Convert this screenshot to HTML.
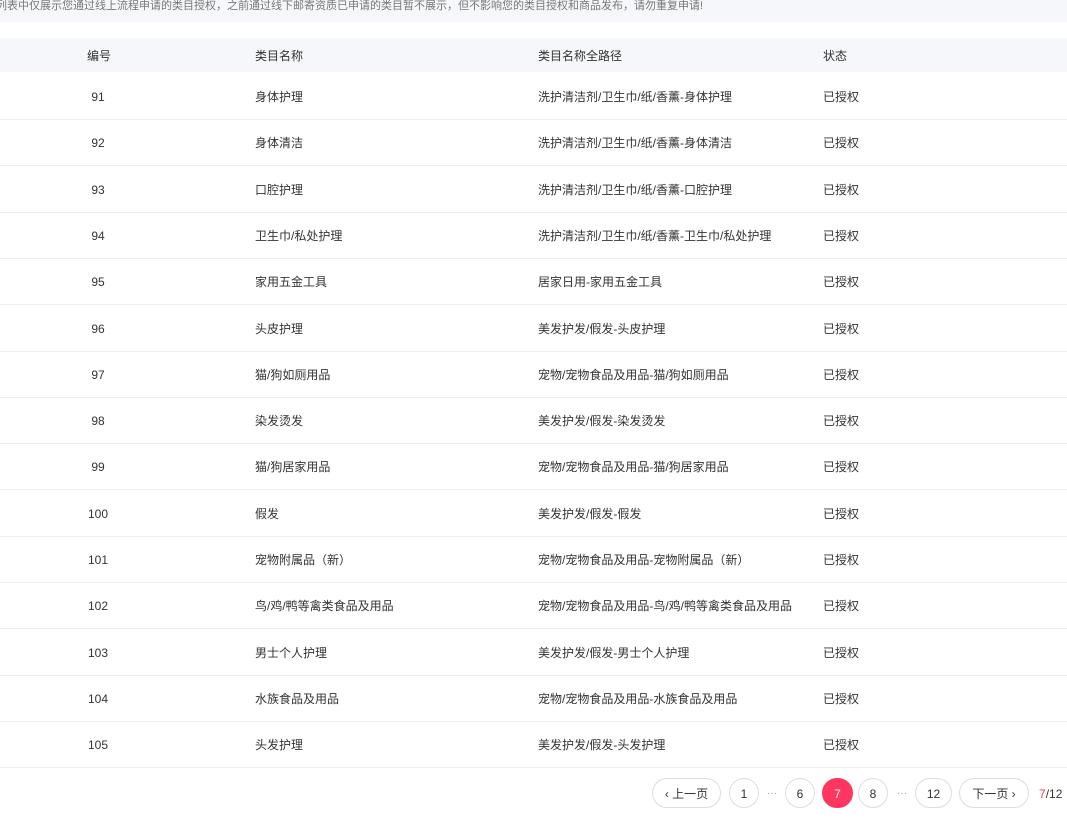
<!DOCTYPE html><html><head><meta charset="utf-8"><style>
body{margin:0;width:1067px;height:820px;background:#fff;font-family:"Liberation Sans","Noto Sans CJK SC",sans-serif;font-size:12px;color:#333;position:relative;overflow:hidden}
.notice{position:absolute;left:0;top:0;width:1067px;height:22px;background:#f6f7fa;color:#777;font-size:11px;line-height:12px;text-indent:-4px}
.hd{position:absolute;left:0;top:38px;width:1067px;height:34px;background:#f6f7fa}
.row{position:absolute;left:0;width:1067px;height:46px;border-bottom:1px solid #eeeff2}
.c{position:absolute;top:0;line-height:inherit;white-space:nowrap}
.b{position:absolute;top:778px;height:28px;border:1px solid #ddd;border-radius:15px;text-align:center;line-height:30px;font-size:12px;color:#333;background:#fff}
.dots{position:absolute;top:781px;line-height:26px;color:#999;font-size:10px}
</style></head><body>
<div class="notice">列表中仅展示您通过线上流程申请的类目授权，之前通过线下邮寄资质已申请的类目暂不展示，但不影响您的类目授权和商品发布，请勿重复申请!</div>
<div class="hd" style="line-height:36px"><span class="c" style="left:87px">编号</span><span class="c" style="left:255px">类目名称</span><span class="c" style="left:538px">类目名称全路径</span><span class="c" style="left:823px">状态</span></div>
<div id="rows"></div>
<div class="b" style="left:652px;width:67px">‹ 上一页</div>
<div class="b" style="left:729px;width:28px">1</div>
<div class="dots" style="left:767px">···</div>
<div class="b" style="left:785px;width:28px">6</div>
<div class="b" style="left:822px;width:29px;background:#fe3660;border-color:#fe3660;color:#fff">7</div>
<div class="b" style="left:858px;width:28px">8</div>
<div class="dots" style="left:897px">···</div>
<div class="b" style="left:915px;width:35px">12</div>
<div class="b" style="left:959px;width:68px">下一页 ›</div>
<div style="position:absolute;left:1039px;top:787px;font-size:12px"><span style="color:#fe3660">7</span>/12</div>
<script>
var d=[["91","身体护理","洗护清洁剂/卫生巾/纸/香薰-身体护理"],["92","身体清洁","洗护清洁剂/卫生巾/纸/香薰-身体清洁"],["93","口腔护理","洗护清洁剂/卫生巾/纸/香薰-口腔护理"],["94","卫生巾/私处护理","洗护清洁剂/卫生巾/纸/香薰-卫生巾/私处护理"],["95","家用五金工具","居家日用-家用五金工具"],["96","头皮护理","美发护发/假发-头皮护理"],["97","猫/狗如厕用品","宠物/宠物食品及用品-猫/狗如厕用品"],["98","染发烫发","美发护发/假发-染发烫发"],["99","猫/狗居家用品","宠物/宠物食品及用品-猫/狗居家用品"],["100","假发","美发护发/假发-假发"],["101","宠物附属品（新）","宠物/宠物食品及用品-宠物附属品（新）"],["102","鸟/鸡/鸭等禽类食品及用品","宠物/宠物食品及用品-鸟/鸡/鸭等禽类食品及用品"],["103","男士个人护理","美发护发/假发-男士个人护理"],["104","水族食品及用品","宠物/宠物食品及用品-水族食品及用品"],["105","头发护理","美发护发/假发-头发护理"]];
var h="";d.forEach(function(r,i){var t=73+i*46.3;h+='<div class="row" style="top:'+t+'px;line-height:49px"><span class="c" style="left:0;width:196px;text-align:center">'+r[0]+'</span><span class="c" style="left:255px">'+r[1]+'</span><span class="c" style="left:538px">'+r[2]+'</span><span class="c" style="left:823px">已授权</span></div>'});
document.getElementById("rows").innerHTML=h;
</script>
</body></html>
